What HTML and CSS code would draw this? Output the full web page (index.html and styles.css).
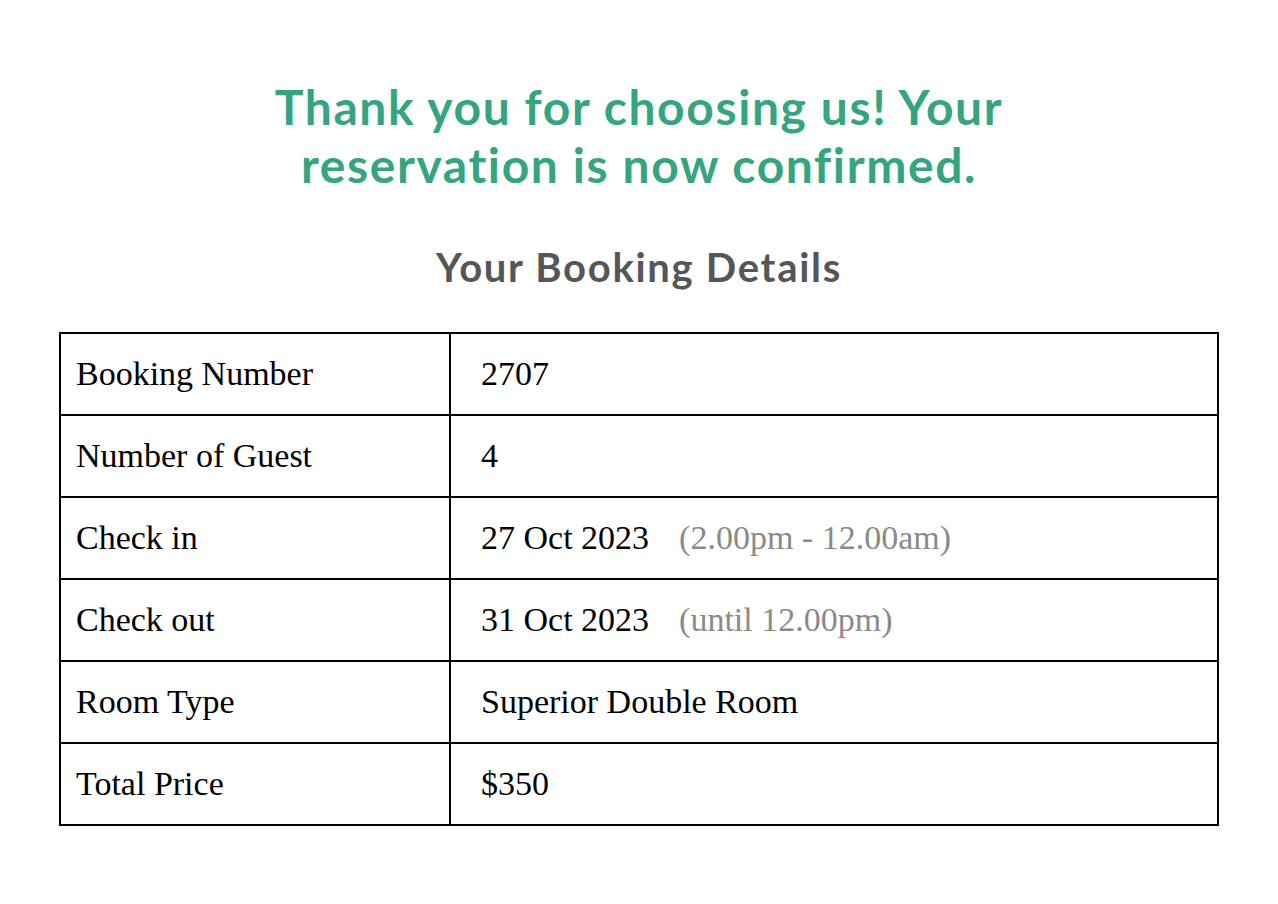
FILE: index.html
```html
<!DOCTYPE html>
<html lang="en">
<head>
<meta charset="utf-8">
<title>Booking Confirmed</title>
<link rel="stylesheet" href="styles.css">
</head>
<body>
<main class="page">
  <h1 class="title">Thank you for choosing us! Your reservation is now confirmed.</h1>
  <h2 class="subtitle">Your Booking Details</h2>
  <table class="details">
    <tr><td class="label">Booking Number</td><td class="value">2707</td></tr>
    <tr><td class="label">Number of Guest</td><td class="value">4</td></tr>
    <tr><td class="label">Check in</td><td class="value">27 Oct 2023<span class="note">(2.00pm - 12.00am)</span></td></tr>
    <tr><td class="label">Check out</td><td class="value">31 Oct 2023<span class="note">(until 12.00pm)</span></td></tr>
    <tr><td class="label">Room Type</td><td class="value">Superior Double Room</td></tr>
    <tr><td class="label">Total Price</td><td class="value">$350</td></tr>
  </table>
</main>
</body>
</html>
```
FILE: styles.css
```css
html, body {
  margin: 0;
  padding: 0;
  background: #ffffff;
}

.page {
  display: flex;
  flex-direction: column;
  align-items: center;
  padding-top: 78px;
}

.title {
  margin: 0;
  max-width: 800px;
  font-family: Lato, "Liberation Sans", sans-serif;
  font-weight: 700;
  font-size: 48px;
  line-height: 58px;
  letter-spacing: 1.6px;
  color: #36a57f;
  text-align: center;
}

.subtitle {
  margin: 49px 0 0;
  font-family: Lato, "Liberation Sans", sans-serif;
  font-weight: 700;
  font-size: 40px;
  line-height: 48px;
  letter-spacing: 1.7px;
  color: #545657;
  text-align: center;
}

.details {
  margin-top: 41px;
  width: 1160px;
  border-collapse: collapse;
  font-family: "Liberation Serif", "Times New Roman", serif;
  font-size: 34px;
  color: #000;
}

.details td {
  border: 2px solid #000;
  height: 80px;
  padding: 0;
  vertical-align: middle;
  white-space: nowrap;
}

.details .label {
  width: 373px;
  padding-left: 15px;
}

.details .value {
  padding-left: 30px;
}

.note {
  margin-left: 30px;
  color: #8a8a8a;
}
```
